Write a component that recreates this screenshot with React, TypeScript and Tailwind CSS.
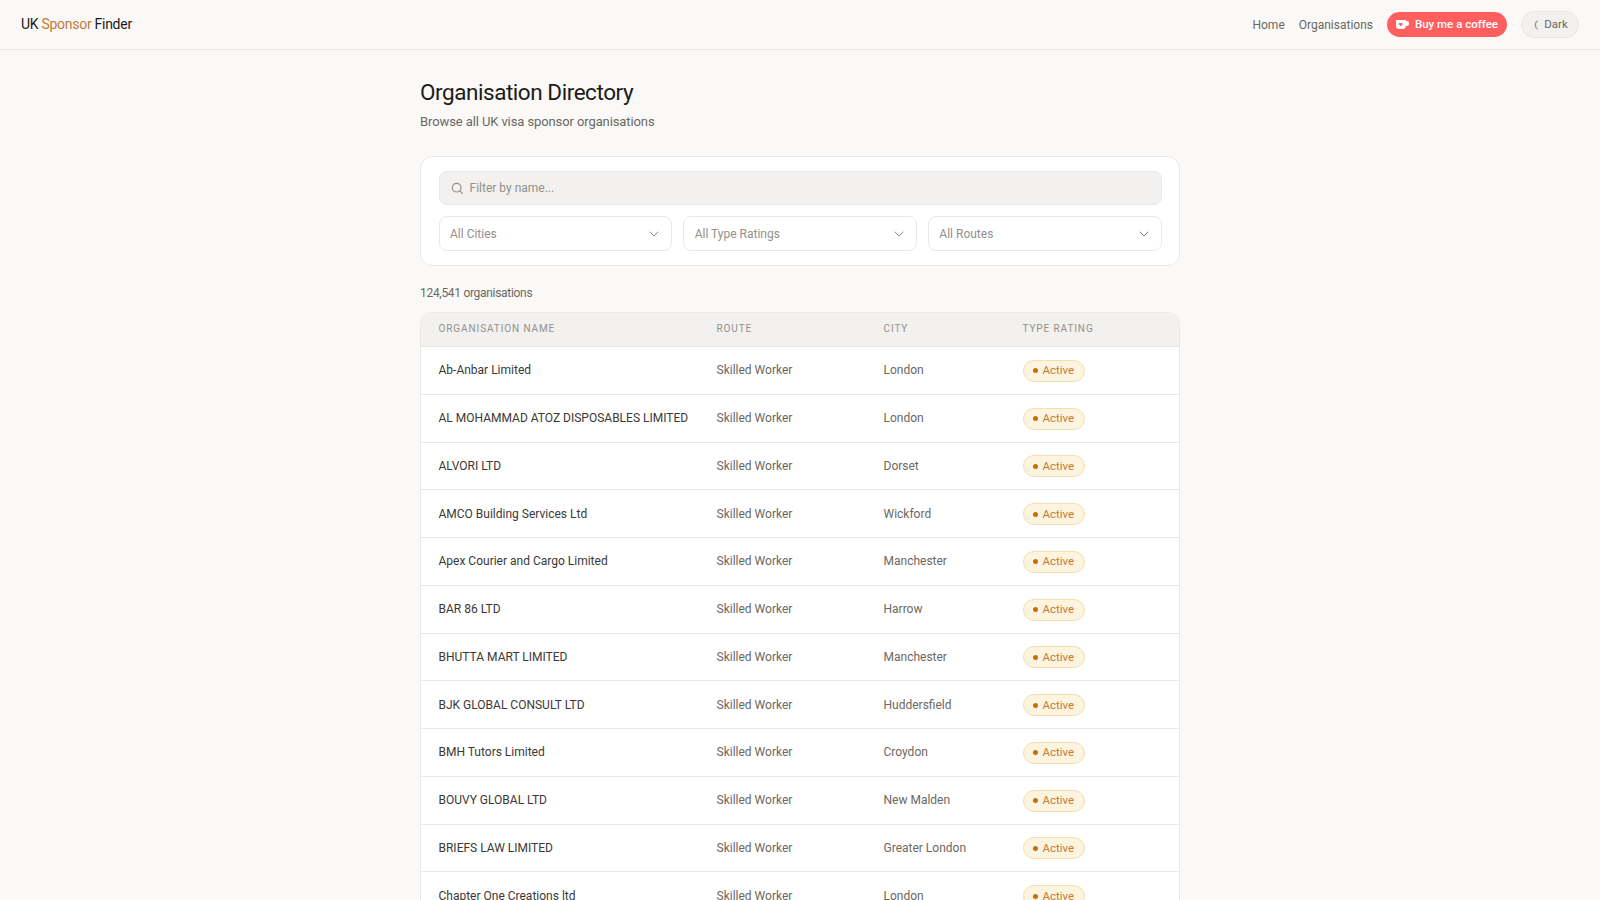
const rows = [
  ["Ab-Anbar Limited", "London"],
  ["AL MOHAMMAD ATOZ DISPOSABLES LIMITED", "London"],
  ["ALVORI LTD", "Dorset"],
  ["AMCO Building Services Ltd", "Wickford"],
  ["Apex Courier and Cargo Limited", "Manchester"],
  ["BAR 86 LTD", "Harrow"],
  ["BHUTTA MART LIMITED", "Manchester"],
  ["BJK GLOBAL CONSULT LTD", "Huddersfield"],
  ["BMH Tutors Limited", "Croydon"],
  ["BOUVY GLOBAL LTD", "New Malden"],
  ["BRIEFS LAW LIMITED", "Greater London"],
  ["Chapter One Creations ltd", "London"],
];

const Chevron = () => (
  <svg width="12" height="12" viewBox="0 0 24 24" fill="none" stroke="#8f8c86" strokeWidth="2" strokeLinecap="round" strokeLinejoin="round">
    <path d="m4 8 8 8 8-8" />
  </svg>
);

const Select = ({ label }: { label: string }) => (
  <div className="flex h-[35px] flex-1 items-center justify-between rounded-[8px] border border-[#eae8e4] bg-white pr-[11px] pl-[10.5px] text-[12px] text-[#93908a]">
    {label}
    <Chevron />
  </div>
);

export default function App() {
  return (
    <div className="h-screen overflow-hidden bg-[#faf9f7] font-['Roboto',sans-serif]">
      <header className="flex h-[50px] items-center justify-between border-b border-[#e8e6e2] px-[21px]">
        <div className="text-[14px] tracking-[-0.02em] text-[#1c1b19]">
          UK <span className="text-[#c47a35]">Sponsor</span> Finder
        </div>
        <nav className="flex items-center text-[12px] text-[#6b6862]">
          <a className="mr-[14px]">Home</a>
          <a className="mr-[14px]">Organisations</a>
          <a className="mr-[14px] flex h-[25px] w-[120px] items-center justify-center gap-[6px] rounded-full bg-[#ff5f5f] text-[11.5px] font-medium text-white">
            <svg width="13" height="9" viewBox="0 0 13 9" fill="none">
              <path d="M0 0h10v1h1a2 2 0 0 1 2 2v1a2 2 0 0 1-2 2h-1.3A3 3 0 0 1 7 9H3a3 3 0 0 1-3-3V0Z" fill="white" />
              <path d="M4.8 6.3 3.1 4.6a1 1 0 0 1 1.5-1.4l.2.2.2-.2a1 1 0 0 1 1.5 1.4L4.8 6.3Z" fill="#ff5f5f" />
            </svg>
            Buy me a coffee
          </a>
          <button className="flex h-[27px] w-[58px] items-center justify-center gap-[4px] rounded-full border border-[#e8e6e2] bg-[#f2f1ef] text-[11.5px] text-[#6b6862]">
            <svg width="8" height="10" viewBox="0 0 8 10" fill="none">
              <path d="M6 .8A4.4 4.4 0 0 0 6 9.2 4.9 4.9 0 0 1 6 .8Z" fill="#93908a" stroke="#93908a" strokeWidth="0.6" strokeLinejoin="round" />
            </svg>
            Dark
          </button>
        </nav>
      </header>

      <main className="mx-auto w-[760px] pt-[27px]">
        <h1 className="text-[22.5px] leading-[30px] font-normal tracking-[-0.02em] text-[#1c1b19]">Organisation Directory</h1>
        <p className="mt-[5px] text-[13px] leading-[20px] tracking-[-0.1px] text-[#6b6862]">Browse all UK visa sponsor organisations</p>

        <section className="mt-[24px] flex flex-col gap-[11px] rounded-[12px] border border-[#eae8e4] bg-white px-[17.5px] py-[14px]">
          <div className="flex h-[34px] items-center gap-[6px] rounded-[8px] border border-[#eae8e4] bg-[#f2f1ef] pl-[11px] text-[12px] text-[#93908a]">
            <svg width="13" height="13" viewBox="0 0 24 24" fill="none" stroke="#93908a" strokeWidth="2.2" strokeLinecap="round">
              <circle cx="10.5" cy="10.5" r="8" />
              <path d="m21 21-4.6-4.6" />
            </svg>
            Filter by name...
          </div>
          <div className="flex gap-[11px]">
            <Select label="All Cities" />
            <Select label="All Type Ratings" />
            <Select label="All Routes" />
          </div>
        </section>

        <p className="mt-[18px] text-[12px] leading-[18px] tracking-[-0.3px] text-[#6b6862]">124,541 organisations</p>

        <div className="mt-[10px] overflow-hidden rounded-[12px] border border-[#eae8e4] bg-white">
          <div className="grid h-[34px] grid-cols-[278px_167px_139px_1fr] items-center border-b border-[#eae8e4] bg-[#f2f1ef] pb-[2px] pl-[17.5px] text-[10px] tracking-[0.09em] text-[#93908a]">
            <div>ORGANISATION NAME</div>
            <div>ROUTE</div>
            <div>CITY</div>
            <div>TYPE RATING</div>
          </div>
          {rows.map(([name, city]) => (
            <div key={name} className="grid h-[47.75px] grid-cols-[278px_167px_139px_1fr] items-center border-b border-[#eae8e4] pl-[17.5px] text-[12px]">
              <div className="text-[#3a3936]">{name}</div>
              <div className="text-[#6b6862]">Skilled Worker</div>
              <div className="text-[#6b6862]">{city}</div>
              <div>
                <span className="mt-[1px] inline-flex h-[22px] w-[62px] items-center gap-[5px] rounded-full border border-[#f5deb0] bg-[#fdf4e0] pl-[9px] text-[11.5px] text-[#c47a35]">
                  <span className="size-[5px] rounded-full bg-[#c2700f]" />
                  Active
                </span>
              </div>
            </div>
          ))}
        </div>
      </main>
    </div>
  );
}
